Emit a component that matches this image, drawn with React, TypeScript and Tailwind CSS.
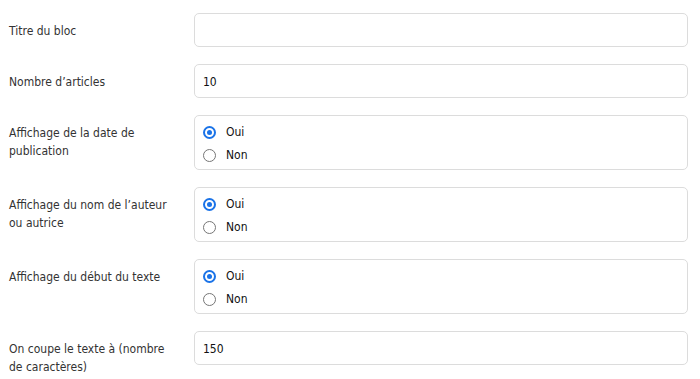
const font = { fontFamily: '"DejaVu Sans Condensed", "DejaVu Sans", sans-serif' };

type Row =
  | { kind: "text"; label: string; value: string }
  | { kind: "radio"; label: string; name: string };

const rows: Row[] = [
  { kind: "text", label: "Titre du bloc", value: "" },
  { kind: "text", label: "Nombre d’articles", value: "10" },
  { kind: "radio", label: "Affichage de la date de publication", name: "date" },
  { kind: "radio", label: "Affichage du nom de l’auteur ou autrice", name: "auteur" },
  { kind: "radio", label: "Affichage du début du texte", name: "debut" },
  { kind: "text", label: "On coupe le texte à (nombre de caractères)", value: "150" },
];

const RadioDot = ({ checked }: { checked: boolean }) =>
  checked ? (
    <span className="w-[13px] h-[13px] rounded-full border-2 border-[#1a73e8] flex items-center justify-center">
      <span className="w-[5px] h-[5px] rounded-full bg-[#1a73e8]" />
    </span>
  ) : (
    <span className="w-[13px] h-[13px] rounded-full border border-[#767676]" />
  );

export default function App() {
  return (
    <div className="w-[700px] h-[379px] bg-white pt-[13px] pl-[9px] pr-[12px] text-[12px] text-[#333]" style={font}>
      {rows.map((row, i) => (
        <div key={i} className="flex mb-[17px]">
          <div className="w-[185px] pr-[10px] pt-[9px] leading-[18px]">
            <div className="w-[172px]">{row.label}</div>
          </div>
          {row.kind === "text" ? (
            <div className="flex-1 h-[34px] border border-[#dcdcdc] rounded-[5px] flex items-center px-[8px] pt-[1px] text-[#111]">
              {row.value}
            </div>
          ) : (
            <div className="flex-1 h-[55px] border border-[#dcdcdc] rounded-[5px] flex flex-col justify-center gap-[10px] pl-[8px] pt-[3px] text-[#111]">
              <div className="flex items-center gap-[10px] leading-[13px]">
                <RadioDot checked />
                <span>Oui</span>
              </div>
              <div className="flex items-center gap-[10px] leading-[13px]">
                <RadioDot checked={false} />
                <span>Non</span>
              </div>
            </div>
          )}
        </div>
      ))}
    </div>
  );
}
